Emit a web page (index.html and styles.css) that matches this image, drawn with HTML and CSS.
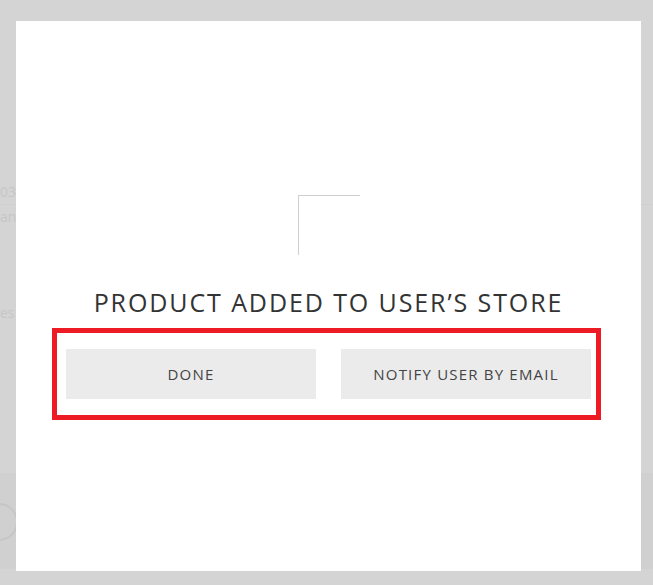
FILE: index.html
```html
<!DOCTYPE html>
<html lang="en">
  <head>
    <meta charset="UTF-8" />
    <meta name="viewport" content="width=device-width, initial-scale=1.0" />
    <title>Product added</title>
    <link rel="stylesheet" href="styles.css">
  </head>
  <body>
    <div class="page">
      <div class="page-row row-1"><span>03</span></div>
      <div class="page-row row-2"><span>an</span></div>
      <div class="page-row row-3"><span>es</span></div>
      <div class="page-row row-4"><span class="ring"></span></div>
    </div>

    <div class="overlay">
      <div class="modal">
        <div class="loader"></div>
        <h2 class="title">PRODUCT ADDED TO USER’S STORE</h2>
        <div class="actions">
          <button class="btn">DONE</button>
          <button class="btn">NOTIFY USER BY EMAIL</button>
        </div>
      </div>
    </div>
  </body>
</html>
```

FILE: styles.css
```css
html, body {
  margin: 0;
  padding: 0;
}
body {
  background-color: #d4d4d4;
  font-family: "Open Sans", "Liberation Sans", sans-serif;
  width: 653px;
  height: 585px;
  overflow: hidden;
}
.page {
  color: #c6c6c6;
  font-size: 14px;
}
.page-row {
  height: 24px;
  line-height: 24px;
  border-bottom: 1px solid #d0d0d0;
}
.row-1 {
  margin-top: 180px;
}
.row-2 {
  border-bottom: none;
}
.row-3 {
  margin-top: 72px;
  border-bottom: none;
}
.row-4 {
  margin-top: 148px;
  height: 96px;
  padding-top: 30px;
  box-sizing: border-box;
  background-color: #d0d0d0;
  border-bottom: none;
}
.ring {
  display: inline-block;
  width: 34px;
  height: 34px;
  margin-left: -20px;
  border: 2px solid #c6c6c6;
  border-radius: 50%;
}
.overlay {
  position: fixed;
  top: 0;
  left: 0;
  right: 0;
  bottom: 0;
  padding: 21px 0 0 16px;
}
.modal {
  width: 625px;
  height: 550px;
  background-color: #fff;
  padding-top: 174px;
  box-sizing: border-box;
  display: flex;
  flex-direction: column;
  align-items: center;
}
.loader {
  width: 62px;
  height: 60px;
  border-top: 1px solid #cfcfcf;
  border-left: 1px solid #cfcfcf;
  box-sizing: border-box;
}
.title {
  margin: 32px 0 11px;
  font-size: 25px;
  line-height: 30px;
  font-weight: normal;
  letter-spacing: 1.9px;
  color: #333;
}
.actions {
  align-self: flex-start;
  margin-left: 36px;
  width: 549px;
  box-sizing: border-box;
  border: 5px solid #ed1c24;
  padding: 16px 5px 16px 9px;
  display: flex;
  gap: 25px;
}
.btn {
  width: 250px;
  height: 50px;
  border: none;
  background-color: #ebebeb;
  font-family: "Open Sans", "Liberation Sans", sans-serif;
  font-size: 15px;
  letter-spacing: 1.2px;
  color: #444;
  cursor: pointer;
}
```
